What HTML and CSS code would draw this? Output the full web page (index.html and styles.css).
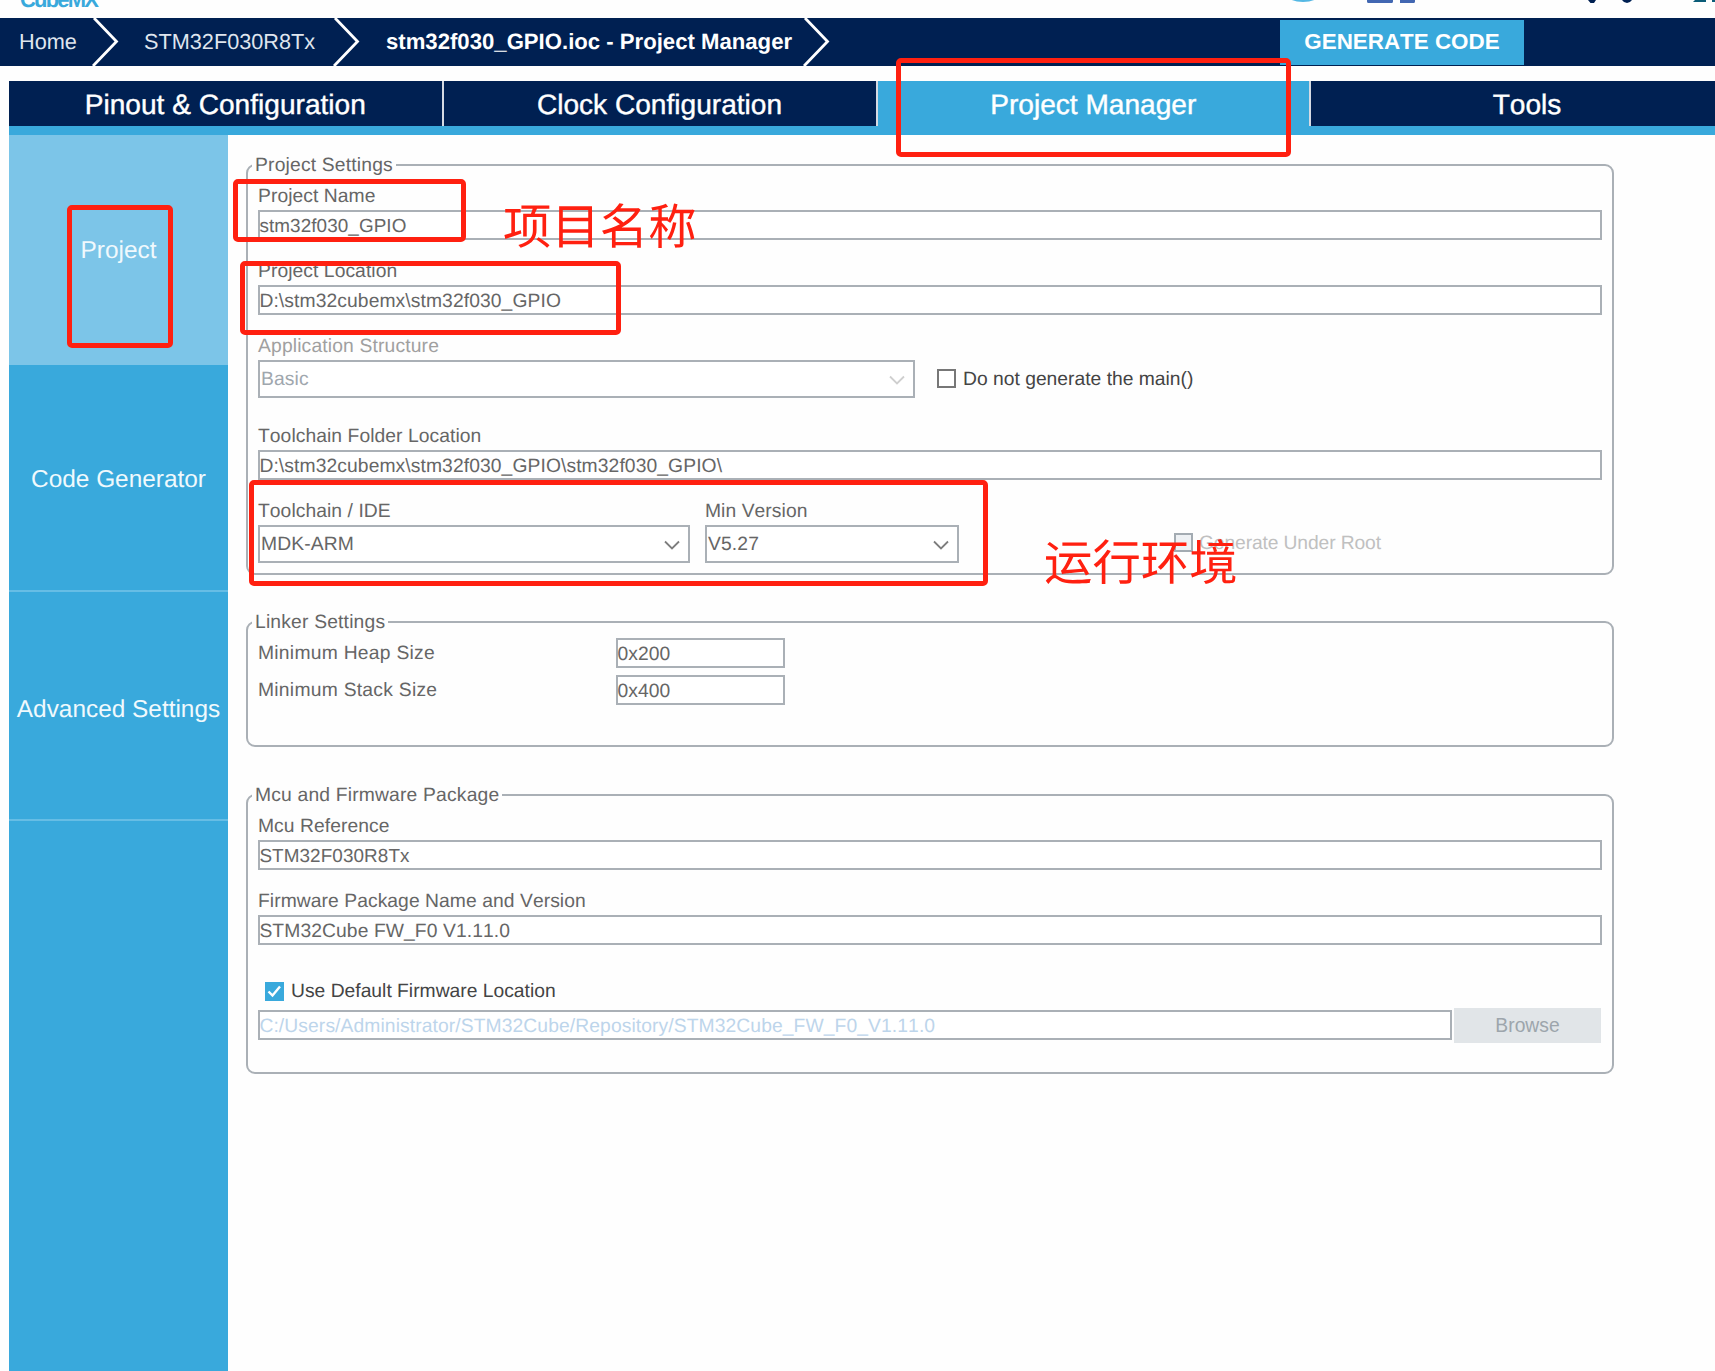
FILE: index.html
```html
<!DOCTYPE html>
<html lang="en">
<head>
<meta charset="utf-8">
<title>STM32CubeMX - Project Manager</title>
<link rel="stylesheet" href="styles.css">
</head>
<body>
<div class="app">
  <header class="brand-bar">
    <span class="brand">CubeMX</span>
    <svg class="social" width="440" height="6" viewBox="0 0 440 6" aria-hidden="true">
      <ellipse cx="28" cy="-6" rx="17" ry="8" fill="#55b8e4"/>
      <path d="M92 0h26v1.500a1.500 1.500 0 0 1-1.500 1.500h-23a1.500 1.500 0 0 1-1.500-1.500zM125 0h15v1.500a1.500 1.500 0 0 1-1.500 1.500h-13.500z" fill="#4267b2"/>
      <path d="M313 0h8l-2 3h-3.500zM347 0h10q-2 3-5 3t-5-3z" fill="#002052"/>
      <path d="M420 0h11v2h-13zM437 0h3v2h-3z" fill="#0b5c78"/>
    </svg>
  </header>

  <nav class="crumbs">
    <a class="crumb crumb-home">Home</a>
    <svg class="arrow" width="27" height="48" viewBox="0 0 27 48"><path d="M2 0L24.500 23.500L1 48"/></svg>
    <a class="crumb crumb-mcu">STM32F030R8Tx</a>
    <svg class="arrow" width="27" height="48" viewBox="0 0 27 48"><path d="M2 0L24.500 23.500L1 48"/></svg>
    <a class="crumb crumb-current">stm32f030_GPIO.ioc - Project Manager</a>
    <svg class="arrow" width="27" height="48" viewBox="0 0 27 48"><path d="M2 0L24.500 23.500L1 48"/></svg>
    <button class="generate">GENERATE CODE</button>
  </nav>

  <nav class="tabs">
    <a class="tab">Pinout &amp; Configuration</a>
    <a class="tab">Clock Configuration</a>
    <a class="tab active">Project Manager</a>
    <a class="tab">Tools</a>
  </nav>

  <div class="body">
    <aside class="side">
      <a class="side-item active">Project</a>
      <a class="side-item code">Code Generator</a>
      <a class="side-item advanced">Advanced Settings</a>
    </aside>

    <main class="content">
      <fieldset class="group project">
        <legend>Project Settings</legend>
        <label class="label">Project Name</label>
        <div class="field narrow">stm32f030_GPIO</div>
        <label class="label">Project Location</label>
        <div class="field">D:\stm32cubemx\stm32f030_GPIO</div>
        <label class="label disabled">Application Structure</label>
        <div class="structure-row">
          <div class="select structure disabled">Basic<svg class="chevron" width="16" height="10" viewBox="0 0 16 10"><path d="M1 1.500L8 8.500L15 1.500"/></svg></div>
          <span class="box"></span><span class="check-text">Do not generate the main()</span>
        </div>
        <label class="label">Toolchain Folder Location</label>
        <div class="field">D:\stm32cubemx\stm32f030_GPIO\stm32f030_GPIO\</div>
        <div class="toolchain-row">
          <div class="ide">
            <label class="label">Toolchain / IDE</label>
            <div class="select">MDK-ARM<svg class="chevron" width="16" height="10" viewBox="0 0 16 10"><path d="M1 1.500L8 8.500L15 1.500"/></svg></div>
          </div>
          <div class="version">
            <label class="label">Min Version</label>
            <div class="select">V5.27<svg class="chevron" width="16" height="10" viewBox="0 0 16 10"><path d="M1 1.500L8 8.500L15 1.500"/></svg></div>
          </div>
          <div class="under-root"><span class="box off"></span><span class="check-text">Generate Under Root</span></div>
        </div>
      </fieldset>

      <fieldset class="group linker">
        <legend>Linker Settings</legend>
        <div class="size-row"><label>Minimum Heap Size</label><div class="field">0x200</div></div>
        <div class="size-row"><label>Minimum Stack Size</label><div class="field">0x400</div></div>
      </fieldset>

      <fieldset class="group firmware">
        <legend>Mcu and Firmware Package</legend>
        <label class="label">Mcu Reference</label>
        <div class="field narrow">STM32F030R8Tx</div>
        <label class="label">Firmware Package Name and Version</label>
        <div class="field">STM32Cube FW_F0 V1.11.0</div>
        <div class="default-row">
          <svg width="19" height="19" viewBox="0 0 19 19"><rect width="19" height="19" fill="#39a9dc"/><path d="M3.500 9.500L7.500 13.500L15 4.500" fill="none" stroke="#fff" stroke-width="2.400"/></svg>
          <span class="check-text">Use Default Firmware Location</span>
        </div>
        <div class="path-row">
          <div class="field path">C:/Users/Administrator/STM32Cube/Repository/STM32Cube_FW_F0_V1.11.0</div>
          <button class="browse">Browse</button>
        </div>
      </fieldset>
    </main>
  </div>

  <div class="mark mark-tab"></div>
  <div class="mark mark-side"></div>
  <div class="mark mark-name"></div>
  <div class="mark mark-location"></div>
  <div class="mark mark-toolchain"></div>
  <div class="note note-name">项目名称</div>
  <div class="note note-env">运行环境</div>
</div>
</body>
</html>
```
FILE: styles.css
```css
* { box-sizing: border-box; }

body {
  margin: 0;
  background: #fefefe;
  font: 19.3px/22px "Liberation Sans", Arial, sans-serif;
  font-kerning: none;
  font-variant-ligatures: none;
  text-rendering: geometricPrecision;
  color: #666;
}

button { font: inherit; border: 0; padding: 0; border-radius: 0; }

.app {
  position: relative;
  width: 1715px;
  height: 1371px;
  overflow: hidden;
}

/* Brand strip, scrolled mostly out of view */
.brand-bar {
  display: flex;
  justify-content: space-between;
  align-items: flex-end;
  height: 18px;
  overflow: hidden;
}
.brand {
  padding-left: 20px;
  margin-bottom: 7px;
  font-size: 22px;
  font-weight: bold;
  letter-spacing: -1.8px;
  color: #39a9dc;
}
.social { align-self: flex-start; }

/* Breadcrumb bar */
.crumbs {
  display: flex;
  align-items: center;
  height: 48px;
  background: #002052;
  color: #dfe5ee;
  font-size: 21.7px;
  white-space: nowrap;
}
.crumb-home { width: 92px; padding-left: 19px; }
.crumb-mcu { width: 214px; padding-left: 25px; }
.crumb-current { width: 443px; padding-left: 26px; font-weight: bold; font-size: 22.150px; color: #fff; }
.arrow path { fill: none; stroke: #fff; stroke-width: 2.8; }
.generate {
  width: 244px;
  height: 45px;
  margin-left: 450px;
  background: #39a9dc;
  color: #fff;
  font-weight: bold;
  font-size: 22.4px;
}

/* Main tabs */
.tabs {
  display: grid;
  grid-template-columns: 434.500px 434px 433.500px 434px;
  height: 54px;
  margin: 15px 0 0 9px;
  border-bottom: 9px solid #39a9dc;
  overflow: hidden;
}
.tab {
  padding-top: 12px;
  border-right: 2px solid #d5dae3;
  background: #002052;
  color: #fff;
  text-align: center;
  font-size: 28.1px;
  line-height: 24px;
  -webkit-text-stroke: .4px #fff;
}
.tab.active { background: #39a9dc; }

.body { display: flex; height: 1236px; padding-left: 9px; }

.side { flex: none; width: 219px; background: #39a9dc; }
.side-item {
  display: flex;
  align-items: center;
  justify-content: center;
  height: 229.500px;
  padding-top: 4px;
  border-bottom: 2px solid #66bde5;
  color: #f0f9fd;
  font-size: 24.4px;
}
.side-item.code { height: 227px; padding-top: 6px; }
.side-item.advanced { padding-top: 9px; }
.side-item.active { background: #7cc5e8; border-color: #7cc5e8; }

/* Settings groups */
.content { padding: 19px 0 0 18px; }
.group {
  width: 1368px;
  margin: 0;
  padding: 9px 10px 0;
  border: 2px solid #aab0b6;
  border-radius: 9px;
}
.group legend {
  height: 22px;
  margin-left: -6px;
  padding: 1px 3px 0;
  letter-spacing: .18px;
}
.project { height: 421px; }
.linker { height: 136px; margin-top: 36px; padding-top: 5px; }
.firmware { height: 290px; margin-top: 37px; }

.label { display: block; height: 25px; padding-top: 1px; letter-spacing: .06px; }
.label.disabled { color: #a0a0a0; letter-spacing: .15px; }

.field {
  height: 30px;
  margin-bottom: 20px;
  padding: 3.500px 0 0;
  border: 2px solid #aab0b6;
  background: #fff;
  white-space: nowrap;
  letter-spacing: .09px;
  text-indent: -.6px;
}
.narrow { font-size: 18.900px; letter-spacing: .08px; }

.select {
  display: flex;
  align-items: center;
  justify-content: space-between;
  height: 38px;
  padding: 1px 8px 0 1px;
  border: 2px solid #aab0b6;
  background: #fff;
  letter-spacing: .12px;
}
.select.disabled { color: #9fa7ae; }
.chevron path { fill: none; stroke: #7d7d7d; stroke-width: 1.8; }
.disabled .chevron path { stroke: #cfcfcf; }

.structure-row { display: flex; align-items: center; margin-bottom: 27px; }
.structure { width: 657px; }
.box {
  width: 19px;
  height: 19px;
  margin: 0 7px 1px 22px;
  border: 2px solid #777;
  background: #fff;
}
.box.off { margin-left: 0; margin-right: 6px; border-color: #a3abb2; background: #eef1f4; }
.check-text { padding-top: 1px; color: #444; }

.toolchain-row { display: flex; }
.ide { width: 432px; }
.version { width: 254px; margin-left: 15px; }
.under-root { display: flex; align-items: center; height: 18px; margin: 34px 0 0 215px; }
.under-root .check-text { color: #c0c0c0; letter-spacing: -.13px; }

.size-row { display: flex; align-items: center; height: 30px; margin-bottom: 7px; }
.size-row label { width: 358px; padding-top: 2px; letter-spacing: .26px; }
.size-row .field { width: 169px; margin: 0; }

.default-row { display: flex; gap: 7px; align-items: center; height: 20px; margin: 36px 0 7px 7px; }
.path-row { display: flex; align-items: flex-start; gap: 2px; height: 35px; }
.path { width: 1194px; margin: 2px 0 0; color: #bdd5eb; }
.browse { width: 147px; height: 35px; background: #e1e5e8; color: #9da5ac; }

/* Hand-drawn highlights over the window */
.mark { position: absolute; border: 5px solid #ff2010; border-radius: 5px; }
.mark-tab { left: 896px; top: 58px; width: 395px; height: 99px; }
.mark-side { left: 67px; top: 205px; width: 106px; height: 143px; }
.mark-name { left: 233px; top: 179px; width: 233px; height: 63px; }
.mark-location { left: 240px; top: 261px; width: 381px; height: 74px; }
.mark-toolchain { left: 249px; top: 480px; width: 739px; height: 106px; }
.note {
  position: absolute;
  color: #ff2010;
  font: 48.400px/48px "Noto Sans CJK SC", sans-serif;
  white-space: nowrap;
}
.note-name { left: 503px; top: 199px; }
.note-env { left: 1044px; top: 535px; }
```
